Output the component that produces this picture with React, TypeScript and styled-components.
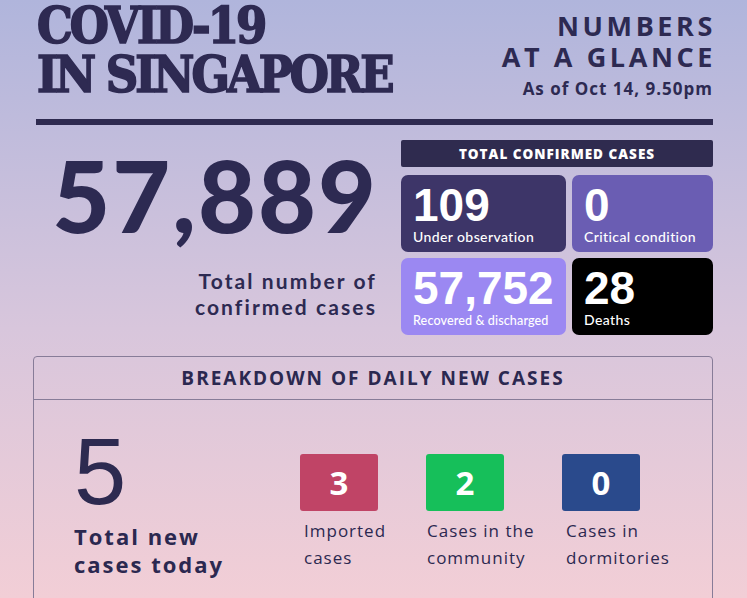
import React from "react";
import styled, { createGlobalStyle } from "styled-components";

const GlobalStyle = createGlobalStyle`
html, body {
  margin: 0;
  padding: 0;
  height: 100%;
}
body {
  background: linear-gradient(180deg, #b0b5dc 0%, #d8c6dc 55%, #f2ced6 100%);
  font-family: "Open Sans", "Noto Sans", sans-serif;
  color: #2d2a52;
}
`;

const Page = styled.div`
width: 747px;
height: 598px;
overflow: hidden;
box-sizing: border-box;
padding: 0 34px 0 36px;
`;

const Header = styled.header`
display: flex;
justify-content: space-between;
align-items: flex-start;
padding-left: 1px;
`;

const Title = styled.h1`
margin: 0;
padding-top: 1px;
font-family: "DejaVu Serif", serif;
font-stretch: condensed;
font-weight: 700;
font-size: 50px;
line-height: 49px;
letter-spacing: -3px;
color: #2e2a52;
-webkit-text-stroke: 1.6px #2e2a52;
`;

const Glance = styled.div`
text-align: right;
padding-top: 10px;

.big {
  font-size: 27px;
  font-weight: 700;
  line-height: 31px;
  letter-spacing: 3.6px;
  margin-right: -3px;
}

.date {
  margin-top: 5px;
  font-size: 17px;
  font-weight: 700;
  letter-spacing: 1px;
}
`;

const Rule = styled.div`
height: 6px;
background: #2e2a50;
margin-top: 19px;
`;

const Totals = styled.section`
display: flex;
justify-content: space-between;
margin-top: 15px;
`;

const Headline = styled.div`
width: 339px;
text-align: right;

.number {
  font-family: Lato, sans-serif;
  font-weight: 900;
  font-size: 100px;
  line-height: 100px;
  letter-spacing: 2px;
  margin-top: 4px;
  margin-right: -3px;
}

.caption {
  margin-top: 24px;
  font-family: Lato, sans-serif;
  font-weight: 700;
  font-size: 21px;
  line-height: 26px;
  letter-spacing: 2.1px;
  margin-right: -2px;
}
`;

const Board = styled.div`
width: 312px;
`;

const BoardTitle = styled.div`
height: 27px;
background: #2f2b4f;
border-radius: 2px;
color: #fff;
font-family: "Open Sans", sans-serif;
font-size: 13.5px;
font-weight: 800;
letter-spacing: 1px;
display: flex;
align-items: center;
justify-content: center;
`;

const CardGrid = styled.div`
margin-top: 8px;
display: grid;
grid-template-columns: 165px 141px;
grid-auto-rows: 77px;
gap: 6px;
`;

const Card = styled.div<{ $bg: string }>`
background: ${(p) => p.$bg};
border-radius: 7px;
color: #fff;
padding: 7px 12px 0 12px;
box-sizing: border-box;

.value {
  font-family: "Liberation Sans", Arial, sans-serif;
  font-weight: 700;
  font-size: 46px;
  line-height: 46px;
}
`;

const CardLabel = styled.div<{ $small?: boolean }>`
font-family: Lato, sans-serif;
font-size: ${(p) => (p.$small ? "12.6px" : "14px")};
font-weight: 500;
letter-spacing: ${(p) => (p.$small ? "0.1px" : "0.4px")};
line-height: 18px;
margin-top: ${(p) => (p.$small ? "1px" : "0")};
white-space: nowrap;
`;

const Breakdown = styled.section`
margin: 21px 0 0 -3px;
border: 1px solid #877c98;
border-radius: 4px;
height: 300px;
`;

const BreakdownTitle = styled.div`
height: 42px;
border-bottom: 1px solid #877c98;
display: flex;
align-items: center;
justify-content: center;
font-family: "Open Sans", sans-serif;
font-size: 19px;
font-weight: 700;
letter-spacing: 2px;
color: #2b2850;
`;

const BreakdownBody = styled.div`
display: flex;
padding: 22px 0 0 40px;
`;

const Today = styled.div`
width: 226px;

.number {
  font-family: "Liberation Sans", Arial, sans-serif;
  font-size: 94px;
  line-height: 100px;
  color: #2d2a50;
}

.caption {
  margin-top: 0;
  font-family: "Open Sans", sans-serif;
  font-weight: 700;
  font-size: 22px;
  line-height: 28px;
  letter-spacing: 2px;
  color: #2b2850;
}
`;

const Sources = styled.div`
display: flex;
gap: 26px;
padding-top: 32px;
`;

const Source = styled.div<{ $w: number }>`
width: ${(p) => p.$w}px;
`;

const Square = styled.div<{ $bg: string }>`
width: 78px;
height: 57px;
border-radius: 3px;
background: ${(p) => p.$bg};
color: #fff;
display: flex;
align-items: center;
justify-content: center;
font-family: "Open Sans", sans-serif;
font-weight: 700;
font-size: 33px;
`;

const SourceLabel = styled.div<{ $shift: number }>`
margin-top: 6px;
padding-left: ${(p) => p.$shift}px;
font-family: "Open Sans", sans-serif;
font-size: 17px;
line-height: 27px;
letter-spacing: 1px;
color: #2b2850;
white-space: nowrap;
`;

const cards = [
  { value: "109", label: "Under observation", bg: "#3d3568" },
  { value: "0", label: "Critical condition", bg: "#6a5db3" },
  { value: "57,752", label: "Recovered & discharged", bg: "#9b88f2", small: true },
  { value: "28", label: "Deaths", bg: "#000000" },
];

const sources = [
  { value: "3", label: ["Imported", "cases"], bg: "#c04466", w: 100, shift: 4 },
  { value: "2", label: ["Cases in the", "community"], bg: "#16bf5a", w: 110, shift: 1 },
  { value: "0", label: ["Cases in", "dormitories"], bg: "#2a4a8c", w: 110, shift: 4 },
];

export default function App() {
  return (
    <>
      <GlobalStyle />
      <Page>
        <Header>
          <Title>
            COVID-19
            <br />
            IN SINGAPORE
          </Title>
          <Glance>
            <div className="big">NUMBERS</div>
            <div className="big">AT A GLANCE</div>
            <div className="date">As of Oct 14, 9.50pm</div>
          </Glance>
        </Header>

        <Rule />

        <Totals>
          <Headline>
            <div className="number">57,889</div>
            <div className="caption">
              Total number of
              <br />
              confirmed cases
            </div>
          </Headline>
          <Board>
            <BoardTitle>TOTAL CONFIRMED CASES</BoardTitle>
            <CardGrid>
              {cards.map((c) => (
                <Card key={c.label} $bg={c.bg}>
                  <div className="value">{c.value}</div>
                  <CardLabel $small={c.small}>{c.label}</CardLabel>
                </Card>
              ))}
            </CardGrid>
          </Board>
        </Totals>

        <Breakdown>
          <BreakdownTitle>BREAKDOWN OF DAILY NEW CASES</BreakdownTitle>
          <BreakdownBody>
            <Today>
              <div className="number">5</div>
              <div className="caption">
                Total new
                <br />
                cases today
              </div>
            </Today>
            <Sources>
              {sources.map((s) => (
                <Source key={s.label[0]} $w={s.w}>
                  <Square $bg={s.bg}>{s.value}</Square>
                  <SourceLabel $shift={s.shift}>
                    {s.label[0]}
                    <br />
                    {s.label[1]}
                  </SourceLabel>
                </Source>
              ))}
            </Sources>
          </BreakdownBody>
        </Breakdown>
      </Page>
    </>
  );
}
